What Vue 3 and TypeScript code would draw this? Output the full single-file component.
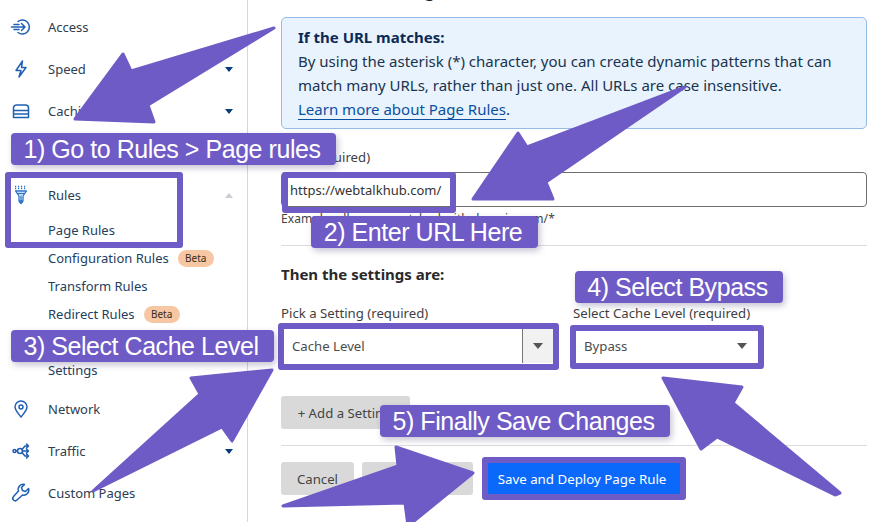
<script setup lang="ts">
const arrows: string[] = [
  '274,28 131,71 123,54 75,119 154,122 148,105',
  '685,87 527,147 518,133 473,199 553,199 546,182',
  '93,491 200,394 191,378 272,370 232,441 222,427',
  '663,378 742,387 733,403 840,493 835,495 717,437 701,449',
  '473,473 396,447 398,466 283,506 405,503 408,526',
]
const frames = [
  { cls: 'f-rules' },
  { cls: 'f-url' },
  { cls: 'f-pick' },
  { cls: 'f-bypass' },
  { cls: 'f-save' },
]
const labels = [
  { cls: 'l1', text: '1) Go to Rules > Page rules' },
  { cls: 'l2', text: '2) Enter URL Here' },
  { cls: 'l3', text: '3) Select Cache Level' },
  { cls: 'l4', text: '4) Select Bypass' },
  { cls: 'l5', text: '5) Finally Save Changes' },
]
</script>

<template>
  <div class="page">
    <aside class="side">
      <div class="row">
        <svg class="ic" viewBox="0 0 18 18"><path d="M6 3.500A7 7 0 1 1 6 14.500M-0.500 9h13.500M9.500 5.500l3.500 3.500-3.500 3.500M2 6.500h5M2 11.500h5" /></svg>
        <span>Access</span>
      </div>
      <div class="row">
        <svg class="ic" viewBox="0 0 18 18"><path d="M10.500 1 4 10.500h5L7 17l7-9.500H9.500z" /></svg>
        <span>Speed</span><i class="caret" />
      </div>
      <div class="row">
        <svg class="ic" viewBox="0 0 18 18"><path d="M1.500 8.500V6a3 3 0 0 1 3-3h9a3 3 0 0 1 3 3v2.500zM1.500 8.500h15v3.500h-15zM1.500 12h15v3.500h-15z" /></svg>
        <span>Caching</span><i class="caret" />
      </div>
      <div class="row"><span class="spacer" /><span>Workers Routes</span></div>
      <div class="row">
        <svg class="ic fun" viewBox="0 0 18 18"><path class="dots" d="M3 0.500h12M3 2.500h12" /><path d="M3.500 5h11L11 10v5H7v-5zM5.500 7.500h7M9 10v7.500M7.500 16l1.500 1.500 1.500-1.500" /></svg>
        <span>Rules</span><i class="caret up" />
      </div>
      <div class="sub">Page Rules</div>
      <div class="sub">Configuration Rules<b class="beta">Beta</b></div>
      <div class="sub">Transform Rules</div>
      <div class="sub">Redirect Rules<b class="beta">Beta</b></div>
      <div class="sub">Origin Rules</div>
      <div class="sub">Settings</div>
      <div class="row gap">
        <svg class="ic" viewBox="0 0 18 18"><path d="M9 17C5.500 12.500 3 10 3 7a6 6 0 0 1 12 0c0 3-2.500 5.500-6 10z" /><circle cx="9" cy="7" r="2" /></svg>
        <span>Network</span>
      </div>
      <div class="row">
        <svg class="ic" viewBox="0 0 18 18"><circle cx="2.500" cy="9" r="1.500" /><circle cx="8" cy="9" r="2.500" /><path d="M4 9h1.500M10 7.500l3-3.500h3M14.500 2l2 2-2 2M10.500 9h6M14.500 7l2 2-2 2M10 10.500l3 3.500h3M14.500 12l2 2-2 2" /></svg>
        <span>Traffic</span><i class="caret" />
      </div>
      <div class="row">
        <svg class="ic" viewBox="0 0 18 18"><path d="M16.500 4.500l-3 3-3-1-1-3 3-3A5 5 0 0 0 6.500 7L1.500 12.500a2.400 2.400 0 0 0 3.500 3.500L10.500 11a5 5 0 0 0 6-6.500z" /></svg>
        <span>Custom Pages</span>
      </div>
    </aside>

    <main class="main">
      <h2 class="title">Create a new Page Rule</h2>
      <section class="note">
        <strong>If the URL matches:</strong>
        <p>By using the asterisk (*) character, you can create dynamic patterns that can</p>
        <p>match many URLs, rather than just one. All URLs are case insensitive.</p>
        <p><a>Learn more about Page Rules</a>.</p>
      </section>

      <label class="lab first">URL (required)</label>
      <div class="input">https://webtalkhub.com/</div>
      <div class="hint">Example: all pages matched with domain.com/*</div>
      <hr class="rule top" />

      <h3 class="then">Then the settings are:</h3>
      <div class="fields">
        <div class="col-a">
          <label class="lab">Pick a Setting (required)</label>
          <div class="sel">
            <span>Cache Level</span>
            <span class="sel-btn"><i class="tri" /></span>
          </div>
        </div>
        <div class="col-b">
          <label class="lab">Select Cache Level (required)</label>
          <div class="sel plain">
            <span>Bypass</span>
            <i class="tri" />
          </div>
        </div>
      </div>
      <button class="btn add">+ Add a Setting</button>
      <hr class="rule low" />
      <div class="actions">
        <button class="btn cancel">Cancel</button>
        <button class="btn draft">Save as Draft</button>
        <button class="btn save">Save and Deploy Page Rule</button>
      </div>
    </main>

    <div class="overlay">
      <svg class="arrows" viewBox="0 0 886 522">
        <polygon v-for="(p, i) in arrows" :key="i" :points="p" />
      </svg>
      <div v-for="f in frames" :key="f.cls" class="frame" :class="f.cls" />
      <div v-for="l in labels" :key="l.cls" class="tag" :class="l.cls">{{ l.text }}</div>
    </div>
  </div>
</template>

<style>
html, body { margin: 0; height: 522px; overflow: hidden; background: #fff; }
</style>

<style scoped>
.page {
  position: relative;
  display: flex;
  width: 886px;
  height: 522px;
  overflow: hidden;
  background: #fff;
  font-family: "Noto Sans", "Open Sans", sans-serif;
  color: #36393a;
}
.side {
  width: 247px;
  box-sizing: content-box;
  border-right: 1px solid #d5d7da;
  padding-top: 6px;
  flex: none;
  font-size: 13px;
  color: #2e3d4f;
}
.row {
  position: relative;
  display: flex;
  align-items: center;
  height: 42px;
  padding-left: 12px;
}
.row.gap { margin-top: 4px; }
.ic {
  width: 18px;
  height: 18px;
  margin-right: 18px;
  flex: none;
  fill: none;
  overflow: visible;
  stroke: #1f5fb4;
  stroke-width: 1.500;
  stroke-linejoin: round;
  stroke-linecap: round;
}
.ic.fun { stroke: #2a73c8; stroke-width: 1.300; }
.ic .dots { stroke-dasharray: 1.200 1.800; stroke-linecap: butt; }
.spacer { width: 36px; flex: none; }
.caret {
  position: absolute;
  left: 225px;
  top: 19px;
  border-left: 4.500px solid transparent;
  border-right: 4.500px solid transparent;
  border-top: 5px solid #083a7c;
}
.caret.up {
  border-top: 0;
  border-bottom: 5px solid #c9ced6;
}
.sub {
  display: flex;
  align-items: center;
  height: 28px;
  padding-left: 48px;
  color: #24405f;
}
.beta {
  display: inline-block;
  margin-left: 9px;
  width: 36px;
  height: 17px;
  line-height: 17px;
  border-radius: 9px;
  background: #f6c7a2;
  color: #3a2a20;
  font-size: 10px;
  font-weight: 400;
  text-align: center;
}
.main {
  flex: 1;
  min-width: 0;
  padding: 0 19px 0 33px;
  font-size: 13px;
}
.title {
  margin: -24px 0 14px;
  height: 27px;
  line-height: 27px;
  font-size: 19px;
  font-weight: 400;
  color: #222;
}
.note {
  box-sizing: border-box;
  height: 112px;
  padding: 7px 16px;
  border: 1px solid #94bce4;
  border-radius: 5px;
  background: #e9f3fd;
  color: #18344f;
  font-size: 15px;
  line-height: 24px;
}
.note strong { display: block; color: #0b2a55; font-weight: 700; }
.note p { margin: 0; }
.note a {
  color: #0b4f9f;
  border-bottom: 1px solid #0b4f9f;
}
.lab {
  display: block;
  height: 18px;
  line-height: 18px;
  font-size: 13.200px;
  color: #3f3f3f;
}
.lab.first { margin-top: 19px; }
.input {
  box-sizing: border-box;
  height: 35px;
  margin-top: 6px;
  padding-left: 8px;
  line-height: 35px;
  border: 1px solid #6f6f6f;
  border-radius: 4px;
  color: #333;
  font-size: 13px;
}
.hint {
  height: 18px;
  line-height: 18px;
  margin-top: 3px;
  font-size: 12px;
  letter-spacing: 0.100px;
  color: #444;
}
.rule {
  height: 1px;
  margin: 0;
  border: 0;
  background: #dcdcdc;
}
.rule.top { margin-top: 17px; }
.rule.low { margin-top: 16px; }
.then {
  margin: 18px 0 0;
  height: 20px;
  line-height: 20px;
  font-size: 15px;
  font-weight: 700;
  color: #2a2a2a;
}
.fields {
  display: flex;
  margin-top: 20px;
}
.col-a { width: 292px; flex: none; }
.col-b { width: 184px; flex: none; }
.sel {
  display: flex;
  align-items: center;
  justify-content: space-between;
  box-sizing: border-box;
  height: 33px;
  margin-top: 7px;
  padding-left: 11px;
  width: 272px;
  font-size: 13.200px;
  color: #4c4c4c;
}
.sel.plain {
  width: 184px;
  padding: 0 10px 0 11px;
}
.sel-btn {
  display: flex;
  align-items: center;
  justify-content: center;
  width: 30px;
  height: 35px;
  border-left: 1px solid #777;
  background: #f1f1f1;
}
.tri {
  display: block;
  border-left: 5.500px solid transparent;
  border-right: 5.500px solid transparent;
  border-top: 6px solid #555;
}
.btn {
  display: block;
  box-sizing: border-box;
  height: 33px;
  padding: 0;
  border: 0;
  border-radius: 3px;
  background: #d9d9d9;
  color: #444;
  font-family: inherit;
  font-size: 13.200px;
}
.add { width: 129px; margin-top: 34px; padding-right: 2px; }
.actions {
  display: flex;
  gap: 8px;
  margin-top: 16px;
}
.cancel { width: 73px; }
.draft { width: 111px; }
.save {
  width: 192px;
  height: 31px;
  margin: 1px 0 0 7px;
  padding-right: 4px;
  border-radius: 0;
  background: #0a69fb;
  color: #fff;
  font-size: 13.300px;
}
.overlay {
  position: absolute;
  inset: 0;
  pointer-events: none;
}
.arrows {
  position: absolute;
  inset: 0;
  width: 886px;
  height: 522px;
}
.arrows polygon {
  fill: #6f5bc6;
  stroke: #6f5bc6;
  stroke-width: 3;
  stroke-linejoin: round;
}
.frame {
  position: absolute;
  box-sizing: border-box;
  border: 6px solid #6f5bc6;
  border-radius: 3px;
}
.f-rules { left: 5px; top: 172px; width: 178px; height: 76px; }
.f-url { left: 282px; top: 172px; width: 174px; height: 41px; }
.f-pick { left: 278px; top: 323px; width: 281px; height: 47px; }
.f-bypass { left: 570px; top: 325px; width: 194px; height: 44px; }
.f-save { left: 482px; top: 457px; width: 204px; height: 43px; }
.tag {
  position: absolute;
  box-sizing: border-box;
  height: 32px;
  line-height: 32px;
  padding-right: 3px;
  border-radius: 4px;
  background: #6f5bc6;
  box-shadow: 2px 3px 6px rgba(70, 60, 110, 0.3);
  color: #fff;
  font-family: "Liberation Sans", Arial, sans-serif;
  font-size: 25px;
  letter-spacing: -0.450px;
  text-align: center;
  white-space: nowrap;
}
.l1 { left: 11px; top: 133px; width: 325px; }
.l2 { left: 311px; top: 216px; width: 227px; }
.l3 { left: 11px; top: 330px; width: 263px; }
.l4 { left: 575px; top: 271px; width: 208px; }
.l5 { left: 380px; top: 405px; width: 290px; }
</style>
